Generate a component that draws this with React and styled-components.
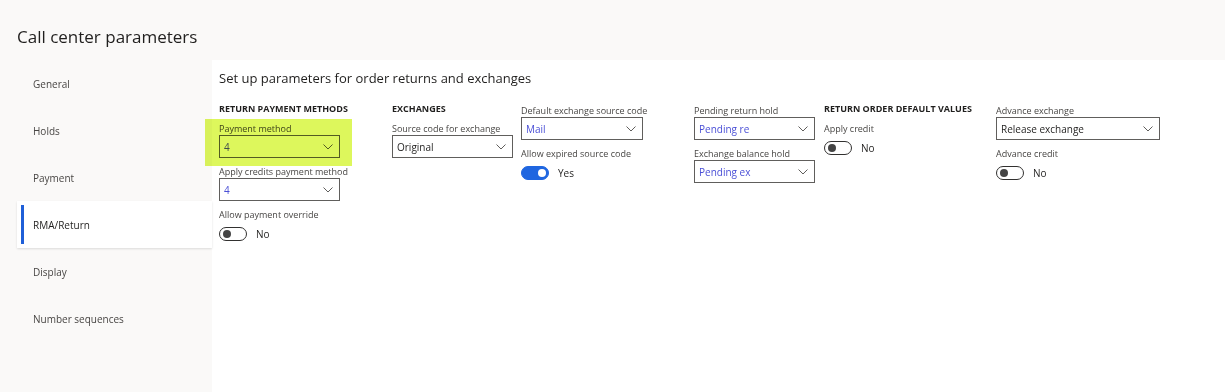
import React from 'react'
import styled, { createGlobalStyle, css } from 'styled-components'

const GlobalStyle = createGlobalStyle`
    html, body {
        margin: 0;
        padding: 0;
        background: #faf9f8;
        font-family: "Open Sans", "Noto Sans", sans-serif;
        color: #323130;
    }
`

const Page = styled.div`
    width: 1225px;
    height: 392px;
    overflow: hidden;
    display: flex;
    flex-direction: column;
    background: #faf9f8;
`

const Title = styled.h1`
    margin: 0;
    height: 61px;
    padding: 24px 0 0 17px;
    box-sizing: border-box;
    font-size: 17px;
    font-weight: 400;
    line-height: 26px;
    color: #201f1e;
`

const Body = styled.div`
    display: flex;
    flex: 1;
    padding-left: 17px;
`

const Sidebar = styled.nav`
    width: 195px;
    margin-top: -1px;
    display: flex;
    flex-direction: column;
`

const Tab = styled.div`
    position: relative;
    height: 47px;
    display: flex;
    align-items: center;
    padding-left: 16px;
    font-size: 10px;
    color: ${p => (p.$active ? '#201f1e' : '#484644')};
    ${p => p.$active && css`
        background: #fff;
        box-shadow: 0 1px 2px rgba(0, 0, 0, 0.12);
        &::before {
            content: '';
            position: absolute;
            left: 4px;
            top: 4px;
            bottom: 4px;
            width: 3px;
            background: #1f5fd8;
        }
    `}
`

const Panel = styled.main`
    flex: 1;
    background: #fff;
    margin-top: -1px;
    padding: 9px 7px;
`

const Heading = styled.h2`
    margin: 0 0 15px;
    font-size: 13px;
    font-weight: 400;
    line-height: 18px;
    color: #201f1e;
`

const Columns = styled.div`
    display: grid;
    grid-template-columns: 173px 129px 173px 130px 172px 200px;
    align-items: start;
`

const Column = styled.div`
    display: flex;
    flex-direction: column;
    align-items: flex-start;
    padding-top: ${p => (p.$offset ? '2px' : '0')};
`

const GroupHeader = styled.div`
    font-size: 9px;
    font-weight: 700;
    line-height: 14px;
    height: 20px;
    color: #201f1e;
    white-space: nowrap;
`

const Field = styled.div`
    position: relative;
    display: flex;
    flex-direction: column;
    margin-bottom: 7px;
    ${p => p.$highlight && css`
        &::after {
            content: '';
            position: absolute;
            left: -14px;
            right: -12px;
            top: -3px;
            bottom: -8px;
            background: #ddf75c;
            mix-blend-mode: multiply;
            pointer-events: none;
        }
    `}
`

const Label = styled.label`
    font-size: 9px;
    line-height: 14px;
    height: 13px;
    color: #484644;
    white-space: nowrap;
`

const Select = styled.div`
    width: ${p => p.$width || 121}px;
    height: 23px;
    box-sizing: border-box;
    border: 1px solid #605e5c;
    display: flex;
    align-items: center;
    justify-content: space-between;
    padding: 0 6px 0 4px;
    font-size: 10px;
    color: ${p => (p.$link ? '#4a4fd6' : '#201f1e')};
    background: #fff;
`

const ToggleRow = styled.div`
    display: flex;
    align-items: center;
    gap: 9px;
    height: 14px;
    margin-top: 6px;
    font-size: 10px;
    color: #201f1e;
`

const Track = styled.span`
    position: relative;
    width: 28px;
    height: 14px;
    box-sizing: border-box;
    border-radius: 7px;
    border: 1px solid ${p => (p.$on ? '#1f66e0' : '#323130')};
    background: ${p => (p.$on ? '#1f66e0' : '#fff')};
    &::after {
        content: '';
        position: absolute;
        top: 2px;
        left: ${p => (p.$on ? '16px' : '3px')};
        width: 8px;
        height: 8px;
        border-radius: 50%;
        background: ${p => (p.$on ? '#fff' : '#444')};
    }
`

function Chevron() {
    return (
        <svg width="10" height="6" viewBox="0 0 10 6" fill="none">
            <path d="M0.5 0.5 L5 5 L9.5 0.5" stroke="#605e5c" strokeWidth="1" />
        </svg>
    )
}

function Dropdown({ label, value, link, width, highlight }) {
    return (
        <Field $highlight={highlight}>
            <Label>{label}</Label>
            <Select $link={link} $width={width}>
                <span>{value}</span>
                <Chevron />
            </Select>
        </Field>
    )
}

function Toggle({ label, on }) {
    return (
        <Field>
            <Label>{label}</Label>
            <ToggleRow>
                <Track $on={on} />
                <span>{on ? 'Yes' : 'No'}</span>
            </ToggleRow>
        </Field>
    )
}

const tabs = ['General', 'Holds', 'Payment', 'RMA/Return', 'Display', 'Number sequences']

export default function App() {
    return (
        <Page>
            <GlobalStyle />
            <Title>Call center parameters</Title>
            <Body>
                <Sidebar>
                    {tabs.map(t => (
                        <Tab key={t} $active={t === 'RMA/Return'}>{t}</Tab>
                    ))}
                </Sidebar>
                <Panel>
                    <Heading>Set up parameters for order returns and exchanges</Heading>
                    <Columns>
                        <Column>
                            <GroupHeader>RETURN PAYMENT METHODS</GroupHeader>
                            <Dropdown label="Payment method" value="4" link highlight />
                            <Dropdown label="Apply credits payment method" value="4" link />
                            <Toggle label="Allow payment override" />
                        </Column>
                        <Column>
                            <GroupHeader>EXCHANGES</GroupHeader>
                            <Dropdown label="Source code for exchange" value="Original" />
                        </Column>
                        <Column $offset>
                            <Dropdown label="Default exchange source code" value="Mail" link width={122} />
                            <Toggle label="Allow expired source code" on />
                        </Column>
                        <Column $offset>
                            <Dropdown label="Pending return hold" value="Pending re" link />
                            <Dropdown label="Exchange balance hold" value="Pending ex" link />
                        </Column>
                        <Column>
                            <GroupHeader>RETURN ORDER DEFAULT VALUES</GroupHeader>
                            <Toggle label="Apply credit" />
                        </Column>
                        <Column $offset>
                            <Dropdown label="Advance exchange" value="Release exchange" width={164} />
                            <Toggle label="Advance credit" />
                        </Column>
                    </Columns>
                </Panel>
            </Body>
        </Page>
    )
}
